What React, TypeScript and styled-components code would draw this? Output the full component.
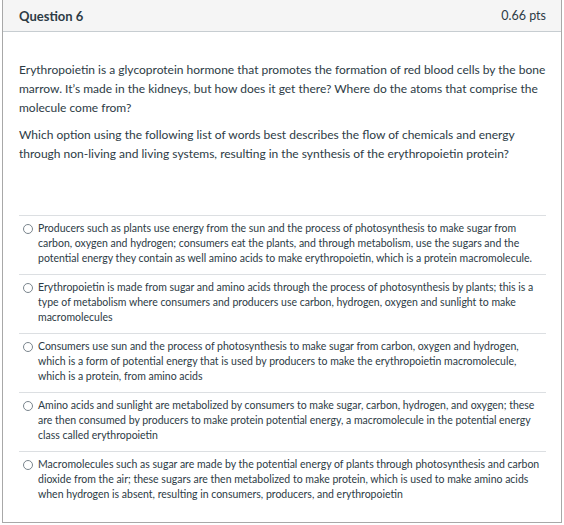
import { FC } from 'react';
import styled, { createGlobalStyle } from 'styled-components';

const GlobalStyle = createGlobalStyle`
  html, body {
    margin: 0;
    padding: 0;
    background: #fff;
  }
  body {
    font-family: Lato, 'Open Sans', sans-serif;
    color: #2d3b45;
  }
`;

const answers = [
  'Producers such as plants use energy from the sun and the process of photosynthesis to make sugar from carbon, oxygen and hydrogen; consumers eat the plants, and through metabolism, use the sugars and the potential energy they contain as well amino acids to make erythropoietin, which is a protein macromolecule.',
  'Erythropoietin is made from sugar and amino acids through the process of photosynthesis by plants; this is a type of metabolism where consumers and producers use carbon, hydrogen, oxygen and sunlight to make macromolecules',
  'Consumers use sun and the process of photosynthesis to make sugar from carbon, oxygen and hydrogen, which is a form of potential energy that is used by producers to make the erythropoietin macromolecule, which is a protein, from amino acids',
  'Amino acids and sunlight are metabolized by consumers to make sugar, carbon, hydrogen, and oxygen; these are then consumed by producers to make protein potential energy, a macromolecule in the potential energy class called erythropoietin',
  'Macromolecules such as sugar are made by the potential energy of plants through photosynthesis and carbon dioxide from the air; these sugars are then metabolized to make protein, which is used to make amino acids when hydrogen is absent, resulting in consumers, producers, and erythropoietin',
];

export const App: FC = () => {
  return (
    <>
      <GlobalStyle />
      <StyledQuestion>
        <Header>
          <span className="name">Question 6</span>
          <span className="points">0.66 pts</span>
        </Header>
        <Body>
          <QuestionText>
            <p>
              Erythropoietin is a glycoprotein hormone that promotes the formation of red blood cells by the bone
              marrow. It’s made in the kidneys, but how does it get there? Where do the atoms that comprise the
              molecule come from?
            </p>
            <p>
              Which option using the following list of words best describes the flow of chemicals and energy
              through non-living and living systems, resulting in the synthesis of the erythropoietin protein?
            </p>
          </QuestionText>
          <Answers>
            {answers.map((text, i) => (
              <Answer key={i}>
                <Radio />
                <span>{text}</span>
              </Answer>
            ))}
          </Answers>
        </Body>
      </StyledQuestion>
    </>
  );
};

export default App;

const StyledQuestion = styled.div`
  margin-left: 2px;
  width: 558px;
  border: 1px solid #a8a8a8;
  border-top: 0;
  background: #fff;
`;

const Header = styled.div`
  display: flex;
  align-items: center;
  justify-content: space-between;
  height: 31px;
  padding: 0 15px 0 16px;
  background: #f5f5f5;
  border-bottom: 1px solid #c7cdd1;
  > .name {
    font-size: 13px;
    font-weight: 700;
    color: #2d3b45;
  }
  > .points {
    font-size: 12.5px;
    color: #2d3b45;
  }
`;

const Body = styled.div`
  padding: 28px 15px 12px 16px;
`;

const QuestionText = styled.div`
  font-size: 12px;
  line-height: 19px;
  > p {
    margin: 0 0 8px;
  }
`;

const Answers = styled.div`
  margin-top: 52px;
`;

const Answer = styled.div`
  display: flex;
  align-items: flex-start;
  gap: 5px;
  padding: 5px 0 8px 4px;
  border-top: 1px solid #dcdfe2;
  font-size: 10.5px;
  line-height: 15px;
`;

const Radio = styled.span`
  flex: none;
  width: 8px;
  height: 8px;
  margin-top: 3px;
  border: 1px solid #7a858d;
  border-radius: 50%;
  background: #fff;
`;
